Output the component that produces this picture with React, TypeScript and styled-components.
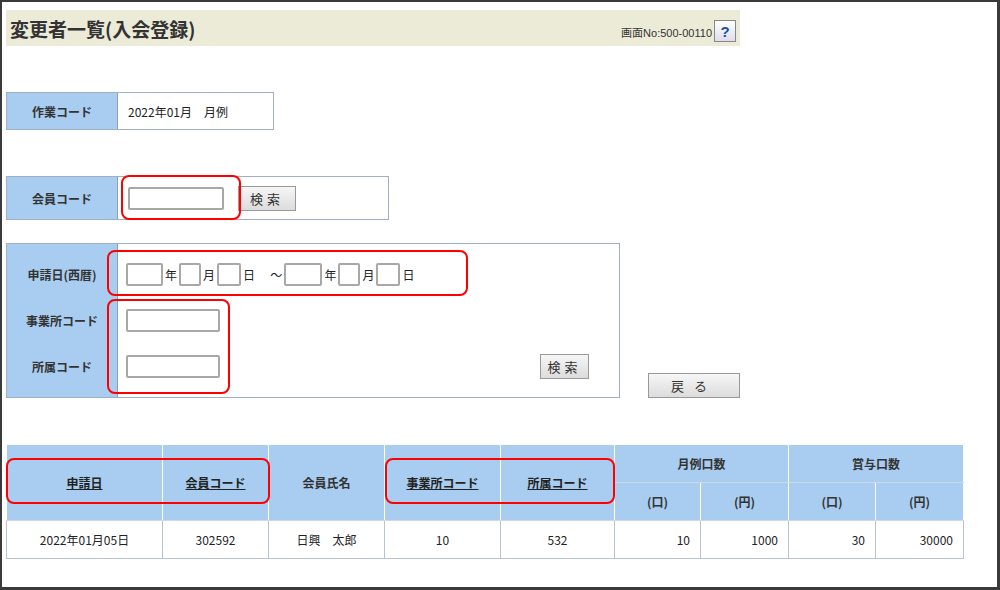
import React from "react";
import styled, { createGlobalStyle } from "styled-components";

const Global = createGlobalStyle`
  html, body { margin: 0; padding: 0; background: #fff; }
  body { font-family: "Liberation Sans", "Noto Sans CJK JP", sans-serif; color: #222; }
`;

const Frame = styled.div`
  position: relative;
  width: 1000px; height: 590px; box-sizing: border-box;
  border: 2px solid #3a3a3a; border-right-width: 3px; border-bottom-width: 3px;
  padding: 8px 0 0 4px;
`;
const TitleBar = styled.div`
  width: 734px; height: 36px; background: #ecebd8;
  display: flex; align-items: center; justify-content: space-between; padding-left: 4px; box-sizing: border-box;
`;
const Title = styled.div`
  font-family: "Noto Sans CJK JP", sans-serif; font-size: 19px; font-weight: 700; color: #333;
`;
const ScreenNo = styled.div`
  display: flex; align-items: flex-end; gap: 2px; font-size: 11px; color: #333; align-self: stretch; padding: 4px 4px 6px 0;
`;
const Help = styled.div`
  width: 20px; height: 20px; border: 1px solid #888; background: linear-gradient(#fff, #dde);
  color: #1d4f9a; font-weight: 700; font-size: 15px; display: flex; align-items: center; justify-content: center;
  margin-bottom: -2px;
`;
const Box = styled.div<{ w: number; mt: number }>`
  width: ${p => p.w}px; margin-top: ${p => p.mt}px; border: 1px solid #9fb0c4;
  display: flex; box-sizing: border-box; background: #fff;
`;
const Label = styled.div`
  width: 110px; flex-shrink: 0; background: #a8cdf0; border-right: 1px solid #8aa0b8;
  font-family: "Noto Sans CJK JP", sans-serif; font-size: 12px; font-weight: 700; color: #333;
  display: flex; flex-direction: column; justify-content: center; align-items: center;
`;
const LabelItem = styled.div` height: 46px; display: flex; align-items: center; `;
const Cell = styled.div`
  display: flex; align-items: center; gap: 14px; padding-left: 10px; font-size: 12px; font-family: "Noto Sans CJK JP", sans-serif;
`;
const Input = styled.div<{ w: number }>`
  width: ${p => p.w}px; height: 23px; box-sizing: border-box; border: 2px solid #a8a8a8; border-radius: 2px; background: #fff;
`;
const Btn = styled.div<{ w: number }>`
  width: ${p => p.w}px; height: 25px; box-sizing: border-box; border: 1px solid #999; background: linear-gradient(#f6f6f6, #dcdcdc);
  font-family: "Noto Sans CJK JP", sans-serif; font-size: 13px; color: #333; display: flex; align-items: center; justify-content: center; letter-spacing: 4px;
`;
const DateRow = styled.div` display: flex; align-items: center; gap: 2px; font-size: 12px; height: 46px; `;
const Col = styled.div` display: flex; flex-direction: column; justify-content: center; padding-left: 8px; flex: 1; `;
const Row2 = styled.div` display: flex; align-items: flex-end; gap: 28px; `;
const Table = styled.table`
  margin-top: 46px; border-collapse: collapse; width: 958px; font-family: "Noto Sans CJK JP", sans-serif; font-size: 12px;
  border: 1px solid #9fb0c4;
  th { background: #a8cdf0; border: 1px solid #fff; border-bottom-color: #cfd9e4; font-weight: 700; color: #333; height: 35px; }
  th a { color: #222; text-decoration: underline; }
  td { border: 1px solid #b8c4d2; height: 35px; text-align: center; }
  td.r { text-align: right; padding-right: 10px; }
`;
const Red = styled.div<{ x: number; y: number; w: number; h: number }>`
  position: absolute; left: ${p => p.x}px; top: ${p => p.y}px; width: ${p => p.w}px; height: ${p => p.h}px;
  border: 2px solid #f00; border-radius: 8px; box-sizing: border-box; pointer-events: none;
`;

export default function App() {
  return (
    <Frame>
      <Global />
      <TitleBar>
        <Title>変更者一覧(入会登録)</Title>
        <ScreenNo>画面No:500-00110<Help>?</Help></ScreenNo>
      </TitleBar>
      <Box w={268} mt={46} style={{ height: 38 }}>
        <Label>作業コード</Label>
        <Cell>2022年01月　月例</Cell>
      </Box>
      <Box w={383} mt={46} style={{ height: 44 }}>
        <Label>会員コード</Label>
        <Cell><Input w={96} /><Btn w={58}>検索</Btn></Cell>
      </Box>
      <Row2>
        <Box w={614} mt={23} style={{ height: 155 }}>
          <Label><LabelItem>申請日(西暦)</LabelItem><LabelItem>事業所コード</LabelItem><LabelItem>所属コード</LabelItem></Label>
          <Col>
            <DateRow>
              <Input w={37} />年 <Input w={22} />月 <Input w={24} />日 　～ <Input w={38} />年 <Input w={22} />月 <Input w={24} />日
            </DateRow>
            <DateRow><Input w={94} /></DateRow>
            <DateRow style={{ justifyContent: "space-between", paddingRight: 30 }}><Input w={94} /><Btn w={49}>検索</Btn></DateRow>
          </Col>
        </Box>
        <Btn w={92} style={{ letterSpacing: 10 }}>戻る</Btn>
      </Row2>
      <Table>
        <colgroup>
          {[156, 106, 116, 116, 114, 86, 88, 87, 88].map((w, i) => <col key={i} style={{ width: w }} />)}
        </colgroup>
        <thead>
          <tr>
            <th rowSpan={2}><a>申請日</a></th>
            <th rowSpan={2}><a>会員コード</a></th>
            <th rowSpan={2}>会員氏名</th>
            <th rowSpan={2}><a>事業所コード</a></th>
            <th rowSpan={2}><a>所属コード</a></th>
            <th colSpan={2}>月例口数</th>
            <th colSpan={2}>賞与口数</th>
          </tr>
          <tr><th>(口)</th><th>(円)</th><th>(口)</th><th>(円)</th></tr>
        </thead>
        <tbody>
          <tr>
            <td>2022年01月05日</td><td>302592</td><td>日興　太郎</td><td>10</td><td>532</td>
            <td className="r">10</td><td className="r">1000</td><td className="r">30</td><td className="r">30000</td>
          </tr>
        </tbody>
      </Table>
      <Red x={119} y={173} w={120} h={45} />
      <Red x={105} y={248} w={361} h={46} />
      <Red x={105} y={297} w={123} h={95} />
      <Red x={4} y={456} w={264} h={46} />
      <Red x={383} y={456} w={230} h={46} />
    </Frame>
  );
}
